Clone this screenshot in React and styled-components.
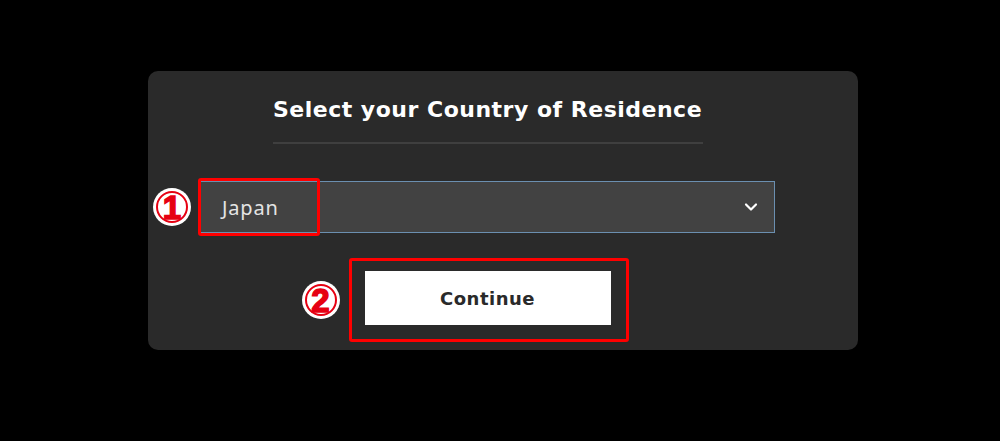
import React, { useState } from 'react';
import styled, { createGlobalStyle } from 'styled-components';

const GlobalStyle = createGlobalStyle`
  html, body {
    margin: 0;
    padding: 0;
    background: #000;
  }
  body {
    font-family: 'DejaVu Sans', 'Liberation Sans', sans-serif;
  }
`;

const Page = styled.div`
  width: 1000px;
  height: 441px;
  box-sizing: border-box;
  padding: 71px 142px 0 148px;
`;

const Card = styled.div`
  width: 710px;
  height: 279px;
  box-sizing: border-box;
  background: #2a2a2a;
  border-radius: 10px;
  padding: 24px 83px 0 52px;
  display: flex;
  flex-direction: column;
  align-items: center;
`;

const Title = styled.h2`
  margin: 0;
  width: 430px;
  text-align: center;
  white-space: nowrap;
  color: #fff;
  font-family: 'DejaVu Sans', sans-serif;
  font-weight: 700;
  font-size: 22px;
  line-height: 30px;
  letter-spacing: 0.5px;
  padding-bottom: 17px;
  border-bottom: 2px solid #3f3f3f;
`;

const Field = styled.div`
  position: relative;
  width: 575px;
  margin-top: 37px;
`;

const Select = styled.div`
  height: 52px;
  box-sizing: border-box;
  background: #424242;
  border: 1px solid #6b8fb0;
  display: flex;
  align-items: center;
  justify-content: space-between;
  padding: 0 16px 0 21px;
  color: #e4e4e4;
  font-family: 'Noto Sans', sans-serif;
  font-size: 20px;
  letter-spacing: 0.8px;
  cursor: pointer;
`;

const ButtonWrap = styled.div`
  position: relative;
  margin-top: 38px;
`;

const ContinueButton = styled.button`
  width: 246px;
  height: 54px;
  border: none;
  background: #fff;
  color: #2a2a2a;
  font-family: 'DejaVu Sans', sans-serif;
  font-weight: 700;
  font-size: 18px;
  letter-spacing: 0.5px;
  cursor: pointer;
`;

const Highlight = styled.div`
  position: absolute;
  border: 3px solid #f00;
  border-radius: 3px;
  pointer-events: none;
  left: ${(p) => p.$left}px;
  top: ${(p) => p.$top}px;
  width: ${(p) => p.$width}px;
  height: ${(p) => p.$height}px;
  box-sizing: border-box;
`;

const Marker = styled.div`
  position: absolute;
  left: ${(p) => p.$left}px;
  top: ${(p) => p.$top}px;
  width: 38px;
  height: 38px;
  border-radius: 50%;
  background: #fff;
  display: flex;
  align-items: center;
  justify-content: center;
  &::before {
    content: '';
    position: absolute;
    inset: 3px;
    border: 2px solid #e60012;
    border-radius: 50%;
  }
`;

const MarkerNumber = styled.span`
  position: relative;
  color: #e60012;
  font-family: 'Liberation Sans', Arial, sans-serif;
  font-weight: 900;
  font-size: 33px;
  line-height: 1;
  -webkit-text-stroke: 1.5px #e60012;
`;

const Chevron = () => (
  <svg width="14" height="14" viewBox="0 0 14 14" fill="none">
    <path d="M2 4.5 L7 9.5 L12 4.5" stroke="#fff" strokeWidth="2.2" strokeLinecap="round" strokeLinejoin="round" />
  </svg>
);

const App = () => {
  const [country] = useState('Japan');

  return (
    <Page>
      <GlobalStyle />
      <Card>
        <Title>Select your Country of Residence</Title>

        <Field>
          <Select>
            <span>{country}</span>
            <Chevron />
          </Select>
          <Highlight $left={-2} $top={-3} $width={122} $height={58} />
          <Marker $left={-47} $top={7}>
            <MarkerNumber>1</MarkerNumber>
          </Marker>
        </Field>

        <ButtonWrap>
          <ContinueButton>Continue</ContinueButton>
          <Highlight $left={-16} $top={-13} $width={280} $height={84} />
          <Marker $left={-63} $top={10}>
            <MarkerNumber>2</MarkerNumber>
          </Marker>
        </ButtonWrap>
      </Card>
    </Page>
  );
};

export default App;
